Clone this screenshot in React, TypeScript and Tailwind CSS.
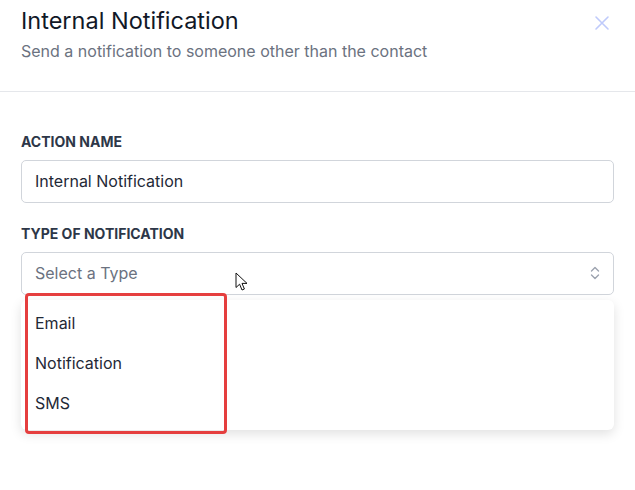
import React from "react";

const CloseIcon = () => (
  <svg width="16" height="16" viewBox="0 0 16 16" fill="none">
    <path d="M2 2L14 14M14 2L2 14" stroke="#bfcafb" strokeWidth="1.6" strokeLinecap="round" />
  </svg>
);

const SortIcon = () => (
  <svg width="10" height="16" viewBox="0 0 10 16" fill="none">
    <path d="M1.5 6L5 2.5L8.5 6" stroke="#9ca3af" strokeWidth="1.4" strokeLinecap="round" strokeLinejoin="round" />
    <path d="M1.5 10L5 13.5L8.5 10" stroke="#9ca3af" strokeWidth="1.4" strokeLinecap="round" strokeLinejoin="round" />
  </svg>
);

const Cursor = () => (
  <svg width="13" height="20" viewBox="0 0 13 20" fill="none">
    <path
      d="M1 1V15.5L4.6 12.2L7 18L9.4 17L7 11.4H12L1 1Z"
      fill="#fff"
      stroke="#111"
      strokeWidth="1"
      strokeLinejoin="round"
    />
  </svg>
);

export default function App() {
  const types = ["Email", "Notification", "SMS"];

  return (
    <div
      className="relative w-[635px] h-[490px] bg-white text-[#1f2937]"
      style={{ fontFamily: "Inter, 'Noto Sans', sans-serif" }}
    >
      <div className="flex items-start justify-between px-[21px] pt-[6px] h-[92px] border-b border-[#e5e7eb]">
        <div>
          <h2 className="text-[23.5px] leading-[30px] text-[#111827]">Internal Notification</h2>
          <p className="mt-[4px] text-[16px] leading-[22px] text-[#6b7280]">
            Send a notification to someone other than the contact
          </p>
        </div>
        <button type="button" className="mt-[9px] mr-[4px]">
          <CloseIcon />
        </button>
      </div>

      <div className="px-[21px] pt-[41px]">
        <label className="block text-[14px] leading-[18px] font-bold uppercase text-[#2d3748]">
          Action Name
        </label>
        <div className="mt-[9px] h-[43px] rounded-[5px] border border-[#d1d5db] flex items-center px-[13px] pb-[2px] text-[16px] text-[#1f2937]">
          Internal Notification
        </div>

        <label className="mt-[22px] block text-[14px] leading-[18px] font-bold uppercase text-[#2d3748]">
          Type of Notification
        </label>
        <div className="relative mt-[9px]">
          <div className="h-[43px] rounded-[5px] border border-[#d1d5db] flex items-center justify-between px-[13px] pb-[2px] text-[16px] text-[#6b7280]">
            <span>Select a Type</span>
            <SortIcon />
          </div>
          <div className="absolute left-0 right-0 top-[48px] h-[130px] rounded-[6px] bg-white shadow-[0_4px_12px_rgba(0,0,0,0.12)]">
            <div className="absolute left-[4px] top-[-7px] w-[202px] h-[141px] rounded-[4px] border-[3px] border-[#e53e3e] pt-[7px]">
              {types.map((t) => (
                <div key={t} className="h-[40px] flex items-center px-[7px] text-[16px] text-[#1f2937]">
                  {t}
                </div>
              ))}
            </div>
          </div>
          <div className="absolute left-[214px] top-[20px]">
            <Cursor />
          </div>
        </div>
      </div>
    </div>
  );
}
